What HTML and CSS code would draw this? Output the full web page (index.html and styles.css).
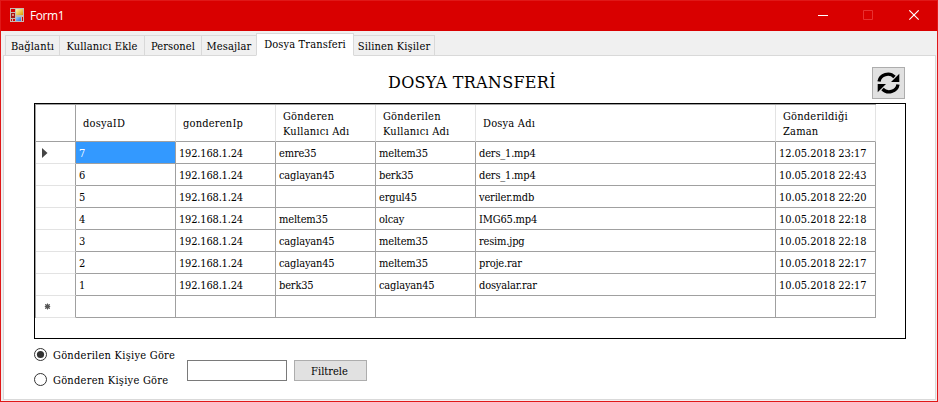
FILE: index.html
```html
<!DOCTYPE html>
<html lang="tr">
<head>
<meta charset="utf-8">
<title>Form1</title>
<link rel="stylesheet" href="styles.css">
</head>
<body>
<div class="window">
  <header class="titlebar">
    <svg class="app-icon" width="14" height="14" viewBox="0 0 14 14">
      <defs>
        <linearGradient id="gold" x2="1" y2="1"><stop offset="0" stop-color="#fff3b0"/><stop offset="1" stop-color="#dca000"/></linearGradient>
        <linearGradient id="sky" x2="1" y2="1"><stop offset="0" stop-color="#9cc8ff"/><stop offset="1" stop-color="#2c6fd0"/></linearGradient>
      </defs>
      <path fill="#c5b9b3" d="M0 0h14v14H0z"/>
      <path fill="#d80000" d="M1 1h4v3H1zM1 11h1v2H1zM3 11h2v2H3zM12 9h1v4h-1z"/>
      <path fill="#a31515" d="M1 5h4v5H1z"/>
      <path fill="#e08a80" d="M2 6h2v2H2z"/>
      <path fill="url(#gold)" d="M6 1h7v6H6z"/>
      <path fill="url(#sky)" d="M6 9h5v4H6z"/>
    </svg>
    <span class="caption">Form1</span>
    <svg class="controls" width="104" height="12" viewBox="0 0 104 12">
      <path d="M0 5.500h10" stroke="#fff"/>
      <path d="M45.500 .5h9v9h-9z" fill="none" stroke="#e83030"/>
      <path d="M91.300 .3l9.400 9.400M100.700 .3l-9.400 9.400" stroke="#fff" stroke-width="1.100"/>
    </svg>
  </header>
  <nav class="tabs">
    <span class="tab t1">Bağlantı</span>
    <span class="tab t2">Kullanıcı Ekle</span>
    <span class="tab t3">Personel</span>
    <span class="tab t4">Mesajlar</span>
    <span class="tab active t5">Dosya Transferi</span>
    <span class="tab t6">Silinen Kişiler</span>
  </nav>
  <main class="page">
    <div class="heading">
      <h1>DOSYA TRANSFERİ</h1>
      <button class="refresh" aria-label="Yenile">
        <svg width="23" height="22" viewBox="0 0 23 22">
          <path d="M2 9.500A9 8.600 0 0 1 17.500 5M21 12.500A9 8.600 0 0 1 5.500 17" fill="none" stroke="#000" stroke-width="3.300"/>
          <path d="M22.300 1.700v8.300h-8.300zM.7 20.300V12h8.300z"/>
        </svg>
      </button>
    </div>
    <div class="grid">
      <table>
        <colgroup><col class="c-head"><col class="c"><col class="c"><col class="c"><col class="c"><col class="c-file"><col class="c"></colgroup>
        <thead>
          <tr><th></th><th>dosyaID</th><th>gonderenIp</th><th>Gönderen<br>Kullanıcı Adı</th><th>Gönderilen<br>Kullanıcı Adı</th><th>Dosya Adı</th><th>Gönderildiği<br>Zaman</th></tr>
        </thead>
        <tbody>
          <tr><td><svg class="mark" width="6" height="10" viewBox="0 0 6 10"><path d="M0 0l5.500 5L0 10z" fill="#444"/></svg></td><td class="selected">7</td><td>192.168.1.24</td><td>emre35</td><td>meltem35</td><td>ders_1.mp4</td><td>12.05.2018 23:17</td></tr>
          <tr><td></td><td>6</td><td>192.168.1.24</td><td>caglayan45</td><td>berk35</td><td>ders_1.mp4</td><td>10.05.2018 22:43</td></tr>
          <tr><td></td><td>5</td><td>192.168.1.24</td><td></td><td>ergul45</td><td>veriler.mdb</td><td>10.05.2018 22:20</td></tr>
          <tr><td></td><td>4</td><td>192.168.1.24</td><td>meltem35</td><td>olcay</td><td>IMG65.mp4</td><td>10.05.2018 22:18</td></tr>
          <tr><td></td><td>3</td><td>192.168.1.24</td><td>caglayan45</td><td>meltem35</td><td>resim.jpg</td><td>10.05.2018 22:18</td></tr>
          <tr><td></td><td>2</td><td>192.168.1.24</td><td>caglayan45</td><td>meltem35</td><td>proje.rar</td><td>10.05.2018 22:17</td></tr>
          <tr><td></td><td>1</td><td>192.168.1.24</td><td>berk35</td><td>caglayan45</td><td>dosyalar.rar</td><td>10.05.2018 22:17</td></tr>
          <tr><td><svg class="mark star" width="7" height="7" viewBox="0 0 7 7"><circle cx="3.500" cy="3.500" r="2.300" fill="#444"/><path d="M3.500 .5v6M.8 3.500h5.400M1.200 1.200l4.600 4.600M5.800 1.200L1.200 5.800" stroke="#555"/></svg></td><td></td><td></td><td></td><td></td><td></td><td></td></tr>
        </tbody>
      </table>
    </div>
    <div class="filter">
      <div class="radios">
        <label><svg width="13" height="13" viewBox="0 0 13 13"><circle cx="6.500" cy="6.500" r="6" fill="#fff" stroke="#333"/><circle cx="6.500" cy="6.500" r="3.600" fill="#333"/></svg><span>Gönderilen Kişiye Göre</span></label>
        <label><svg width="13" height="13" viewBox="0 0 13 13"><circle cx="6.500" cy="6.500" r="6" fill="#fff" stroke="#333"/></svg><span>Gönderen Kişiye Göre</span></label>
      </div>
      <input class="query" type="text" aria-label="Filtre">
      <button class="apply">Filtrele</button>
    </div>
  </main>
</div>
</body>
</html>
```
FILE: styles.css
```css
* { box-sizing: border-box; }

body {
  margin: 0;
  font: 11px/15px "DejaVu Serif Condensed", "DejaVu Serif", serif;
  font-stretch: condensed;
  letter-spacing: 0.2px;
  color: #000;
}

.window {
  width: 938px;
  height: 402px;
  border: 1px solid #e01818;
  background: #f0f0f0;
  display: flex;
  flex-direction: column;
}

.titlebar {
  height: 30px;
  flex: none;
  background: #d90000;
  display: flex;
  align-items: center;
  padding: 0 15px 0 9px;
}

.app-icon { margin-top: -2px; }

.caption {
  margin-left: 6px;
  color: #fff;
  font: 12px/16px "Open Sans", sans-serif;
  letter-spacing: -0.45px;
}

.controls { margin-left: auto; }

.tabs {
  height: 25px;
  flex: none;
  display: flex;
  align-items: flex-end;
  padding-left: 4px;
  margin-bottom: -1px;
  z-index: 1;
  letter-spacing: 0.13px;
}

.tab {
  height: 21px;
  border: 1px solid #d9d9d9;
  border-left: 0;
  line-height: 22px;
  text-align: center;
  white-space: nowrap;
}

.t1 { width: 55px; border-left: 1px solid #d9d9d9; }
.t2 { width: 85px; }
.t3 { width: 57px; }
.t4 { width: 54px; border-right: 0; }
.t5 { width: 98px; }
.t6 { width: 81px; }

.tab.active {
  height: 23px;
  border-left: 1px solid #d9d9d9;
  border-bottom-color: #fff;
  background: #fff;
}

.page {
  flex: 1;
  margin: 0 1px 1px 2px;
  border: 1px solid #d9d9d9;
  background: #fff;
  padding: 11px 29px 0 30px;
}

.heading {
  height: 36px;
  display: flex;
}

h1 {
  margin: 5px 0 0 354px;
  font-family: "DejaVu Serif", serif;
  font-stretch: normal;
  font-size: 16px;
  font-weight: normal;
  line-height: 22px;
  letter-spacing: 0.3px;
  white-space: nowrap;
}

.refresh {
  width: 33px;
  height: 32px;
  margin: 0 1px 0 auto;
  padding: 0 1px 1px 0;
  border: 1px solid #adadad;
  background: #e1e1e1;
  display: grid;
  place-items: center;
}

.grid {
  width: 872px;
  height: 236px;
  border: 1px solid #000;
}

table {
  width: 841px;
  table-layout: fixed;
  border-collapse: separate;
  border-spacing: 0;
  border: solid #a0a0a0;
  border-width: 1px 0 0 1px;
}

.c-head { width: 40px; }
.c { width: 100px; }
.c-file { width: 300px; }

th {
  height: 37px;
  padding: 1px 0 0 7px;
  border-right: 1px solid #e3e3e3;
  border-bottom: 1px solid #a0a0a0;
  font-weight: normal;
  text-align: left;
  white-space: nowrap;
}

td {
  height: 22px;
  padding: 2px 0 0 3px;
  border-right: 1px solid #a0a0a0;
  border-bottom: 1px solid #a0a0a0;
  letter-spacing: -0.18px;
  white-space: nowrap;
}

th:first-child { border-right-color: #a0a0a0; }
td:first-child { border-bottom-color: #e3e3e3; padding: 0 0 0 6px; }
td:last-child { letter-spacing: -0.05px; }

.selected { background: #39f; color: #fff; }

.mark { display: block; }
.star { margin-left: 2px; }

.filter { display: flex; }

.radios { width: 153px; padding-top: 8px; }

label {
  display: flex;
  align-items: center;
  gap: 6px;
  height: 15px;
  margin-bottom: 10px;
  letter-spacing: 0.25px;
  white-space: nowrap;
}

label span { padding-top: 2px; }

.query {
  width: 100px;
  height: 21px;
  margin: 21px 7px 0 0;
  padding: 0 3px;
  border: 1px solid #7a7a7a;
  background: #fff;
  font: inherit;
}

.apply {
  width: 73px;
  height: 21px;
  margin-top: 21px;
  padding: 2px 2px 0 0;
  border: 1px solid #adadad;
  background: #e1e1e1;
  font: inherit;
  letter-spacing: 0;
  color: #000;
}
```
